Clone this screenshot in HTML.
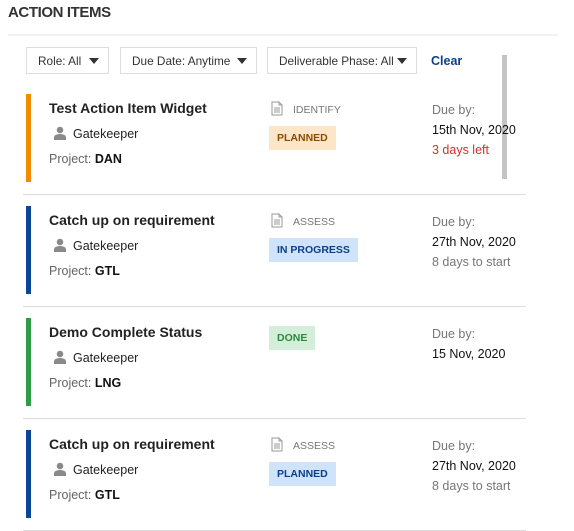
<!DOCTYPE html>
<html><head><style>
body{margin:0;width:574px;height:523px;background:#fff;font-family:"Liberation Sans",Arial,sans-serif;position:relative;overflow:hidden;color:#222}
.t{position:absolute;left:8px;top:4px;font-size:15px;font-weight:bold;color:#333;letter-spacing:-0.4px}
.sep{position:absolute;left:8px;top:34px;width:550px;height:2px;background:#f2f2f2}
.f{position:absolute;top:47px;height:27px;border:1px solid #ddd;box-sizing:border-box;font-size:11.8px;color:#333;line-height:26px;padding-left:11px}
.f i{position:absolute;right:9px;top:10px;border-left:5px solid transparent;border-right:5px solid transparent;border-top:6px solid #333}
.clear{position:absolute;left:431px;top:54px;font-size:12.5px;font-weight:bold;color:#0b3f8c}
.sb{position:absolute;left:502px;top:55px;width:5px;height:124px;background:#c4c4c4}
.card{position:absolute;left:23px;width:503px;height:100px;border-bottom:1px solid #ddd}
.bar{position:absolute;left:3px;top:0;width:5px;height:88px}
.ti{position:absolute;left:26px;top:6px;font-size:14px;font-weight:bold;color:#222}
.gk{position:absolute;left:50px;top:33px;font-size:12.5px;color:#222}
.pi{position:absolute;left:30px;top:32px;width:14px;height:14px}
.pr{position:absolute;left:26px;top:58px;font-size:12.5px;color:#666}
.pr b{color:#111}
.ph{position:absolute;left:270px;top:10px;font-size:10.5px;color:#777}
.ph svg{position:absolute;left:-22px;top:-3px}
.bd{position:absolute;left:246px;top:32px;height:24px;line-height:24px;padding:0 8px;font-size:10.5px;font-weight:bold}
.due{position:absolute;left:409px;top:6px;font-size:12.5px;color:#777;line-height:20px}
.due div:nth-child(2){color:#111}
</style></head><body>
<div class="t">ACTION ITEMS</div>
<div class="sep"></div>
<div class="f" style="left:26px;width:83px">Role: All<i></i></div>
<div class="f" style="left:120px;width:137px">Due Date: Anytime<i></i></div>
<div class="f" style="left:267px;width:150px">Deliverable Phase: All<i></i></div>
<div class="clear">Clear</div>
<div class="sb"></div>

<svg width="0" height="0" style="position:absolute"><defs>
<symbol id="p" viewBox="0 0 14 14"><circle cx="7" cy="4" r="3.3" fill="#8a8a8a"/><path d="M1 14v-2.5C1 9 4 8 7 8s6 1 6 3.5V14z" fill="#8a8a8a"/></symbol>
<symbol id="d" viewBox="0 0 12 15"><path d="M1 1h7l3 3v10H1z" fill="#fff" stroke="#999" stroke-width="1"/><path d="M8 1v3h3M3 7h6M3 9h6M3 11h6" stroke="#999" fill="none"/></symbol>
</defs></svg>

<div class="card" style="top:94px"><div class="bar" style="background:#f08c00"></div>
<div class="ti">Test Action Item Widget</div><svg class="pi"><use href="#p"/></svg><div class="gk">Gatekeeper</div>
<div class="pr">Project: <b>DAN</b></div>
<div class="ph"><svg width="12" height="15"><use href="#d"/></svg>IDENTIFY</div>
<div class="bd" style="background:#fde6c8;color:#8a4d00">PLANNED</div>
<div class="due"><div>Due by:</div><div>15th Nov, 2020</div><div style="color:#d32f2f">3 days left</div></div></div>

<div class="card" style="top:206px"><div class="bar" style="background:#0a4596"></div>
<div class="ti">Catch up on requirement</div><svg class="pi"><use href="#p"/></svg><div class="gk">Gatekeeper</div>
<div class="pr">Project: <b>GTL</b></div>
<div class="ph"><svg width="12" height="15"><use href="#d"/></svg>ASSESS</div>
<div class="bd" style="background:#cfe3fb;color:#0b3f8c">IN PROGRESS</div>
<div class="due"><div>Due by:</div><div>27th Nov, 2020</div><div>8 days to start</div></div></div>

<div class="card" style="top:318px"><div class="bar" style="background:#2e9b48"></div>
<div class="ti">Demo Complete Status</div><svg class="pi"><use href="#p"/></svg><div class="gk">Gatekeeper</div>
<div class="pr">Project: <b>LNG</b></div>
<div class="bd" style="top:8px;background:#d3efd9;color:#2a8a3e">DONE</div>
<div class="due"><div>Due by:</div><div>15 Nov, 2020</div></div></div>

<div class="card" style="top:430px"><div class="bar" style="background:#0a4596"></div>
<div class="ti">Catch up on requirement</div><svg class="pi"><use href="#p"/></svg><div class="gk">Gatekeeper</div>
<div class="pr">Project: <b>GTL</b></div>
<div class="ph"><svg width="12" height="15"><use href="#d"/></svg>ASSESS</div>
<div class="bd" style="background:#cfe3fb;color:#0b3f8c">PLANNED</div>
<div class="due"><div>Due by:</div><div>27th Nov, 2020</div><div>8 days to start</div></div></div>
</body></html>
